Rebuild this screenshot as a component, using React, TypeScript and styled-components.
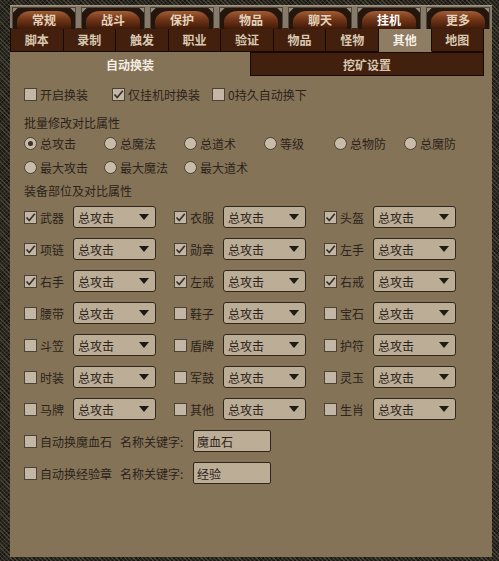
import React from 'react';
import styled, { createGlobalStyle } from 'styled-components';

const GlobalStyle = createGlobalStyle`
  html, body {
    margin: 0;
    padding: 0;
    background: #1f1c17;
  }
  body {
    font-family: "Noto Sans CJK SC", "Noto Sans", sans-serif;
    font-size: 12px;
  }
`;

const Frame = styled.div`
  width: 499px;
  height: 561px;
  box-sizing: border-box;
  padding: 5px 7px 4px 10px;
  background-color: #2a2720;
  background-image:
    repeating-linear-gradient(45deg, rgba(96, 90, 74, 0.55) 0 1px, transparent 1px 3px),
    repeating-linear-gradient(-45deg, rgba(12, 10, 8, 0.6) 0 1px, transparent 1px 3px);
`;

const Panel = styled.div`
  height: 100%;
  display: flex;
  flex-direction: column;
  background: #857358;
  color: #2b2319;
`;

const TopBar = styled.div`
  display: flex;
  gap: 5px;
  height: 23px;
  box-sizing: border-box;
  padding: 1px 2px 0;
  background: #867b6a;
  border-top: 1px solid #a49985;
`;

const TopTab = styled.div<{ $active?: boolean }>`
  position: relative;
  width: 64px;
  height: 22px;
  box-sizing: border-box;
  border: 1px solid #4e453b;
  border-bottom: none;
  background:
    linear-gradient(135deg, #8f8674 0 3px, #3a3129 3px 4px, transparent 4px) top left / 8px 8px no-repeat,
    linear-gradient(225deg, #8f8674 0 3px, #3a3129 3px 4px, transparent 4px) top right / 8px 8px no-repeat,
    #24160d;
  display: flex;
  align-items: center;
  justify-content: center;
  font-weight: bold;
  color: ${p => (p.$active ? '#ffffff' : '#e2d4bc')};

  &::before {
    content: '';
    position: absolute;
    left: 4px;
    right: 4px;
    top: 3px;
    bottom: 0;
    border-radius: 14px 14px 2px 2px / 11px 11px 2px 2px;
    background: linear-gradient(180deg, #a05e36 0%, #743618 45%, #3e1a09 100%);
  }

  span {
    position: relative;
    padding-top: 2px;
  }
`;

const TabRow = styled.div`
  display: flex;
  width: 474px;
  height: 24px;
`;

const SubTab = styled.div<{ $active?: boolean }>`
  flex: 1;
  box-sizing: border-box;
  display: flex;
  align-items: center;
  justify-content: center;
  font-weight: bold;
  border-right: 1px solid #160a03;
  border-bottom: 1px solid #160a03;
  &:first-child {
    border-left: 1px solid #160a03;
  }
  background: ${p => (p.$active ? '#8e7c63' : '#43200e')};
  color: ${p => (p.$active ? '#f6f0e6' : '#d8c9b1')};
  ${p => p.$active && 'border-bottom-color: #8e7c63;'}
`;

const PageTab = styled.div<{ $active?: boolean; $width: number }>`
  width: ${p => p.$width}px;
  box-sizing: border-box;
  display: flex;
  align-items: center;
  justify-content: center;
  font-weight: bold;
  background: ${p => (p.$active ? 'transparent' : '#43200e')};
  color: ${p => (p.$active ? '#f4eee4' : '#d8c9b1')};
  border: ${p => (p.$active ? 'none' : '1px solid #160a03')};
`;

const Body = styled.div`
  display: flex;
  flex-direction: column;
  padding: 8px 0 0 14px;
`;

const Line = styled.div<{ $top?: number }>`
  display: flex;
  align-items: center;
  height: 20px;
  margin-top: ${p => p.$top ?? 0}px;
`;

const Title = styled.div<{ $top?: number }>`
  height: 20px;
  line-height: 20px;
  margin-top: ${p => p.$top ?? 0}px;
`;

const Option = styled.label<{ $width?: number }>`
  display: flex;
  align-items: center;
  gap: 3px;
  width: ${p => (p.$width ? `${p.$width}px` : 'auto')};
  white-space: nowrap;
`;

const Box = styled.span`
  width: 13px;
  height: 13px;
  box-sizing: border-box;
  border: 1px solid #4b4137;
  background: #c3b6a4;
  display: flex;
  align-items: center;
  justify-content: center;
  flex: none;
`;

const Round = styled.span<{ $on?: boolean }>`
  width: 13px;
  height: 13px;
  box-sizing: border-box;
  border-radius: 50%;
  border: 1px solid #4b4137;
  background: #c8bca9;
  display: flex;
  align-items: center;
  justify-content: center;
  flex: none;
  &::after {
    content: '';
    width: 5px;
    height: 5px;
    border-radius: 50%;
    background: ${p => (p.$on ? '#3a3026' : 'transparent')};
  }
`;

const RadioGrid = styled.div<{ $top?: number }>`
  display: grid;
  grid-template-columns: 80px 80px 80px 70px 70px auto;
  height: 20px;
  align-items: center;
  margin-top: ${p => p.$top ?? 0}px;
`;

const PartGrid = styled.div`
  display: grid;
  grid-template-columns: repeat(3, 150px);
  row-gap: 10px;
  margin-top: 5px;
`;

const Part = styled.div`
  display: flex;
  align-items: center;
  height: 22px;
`;

const PartName = styled.span`
  width: 33px;
  margin-left: 3px;
`;

const Select = styled.div`
  width: 83px;
  height: 22px;
  box-sizing: border-box;
  border: 1px solid #2e261d;
  border-radius: 3px;
  background: #bcad97;
  display: flex;
  align-items: center;
  justify-content: space-between;
  padding: 0 6px 0 4px;
`;

const KeyRow = styled.div`
  display: flex;
  align-items: center;
  height: 22px;
  margin-top: 10px;
`;

const KeyLabel = styled.span<{ $width: number; $gap?: number }>`
  width: ${p => p.$width}px;
  margin-left: ${p => p.$gap ?? 0}px;
  white-space: nowrap;
`;

const Input = styled.div`
  width: 78px;
  height: 22px;
  box-sizing: border-box;
  border: 1px solid #2e261d;
  border-radius: 2px;
  background: #bcad97;
  display: flex;
  align-items: center;
  padding-left: 3px;
`;

const Check = ({ on }: { on?: boolean }) => (
  <Box>
    {on && (
      <svg width="11" height="11" viewBox="0 0 11 11">
        <polyline points="1.5,5.5 4.2,8.5 9.8,1.8" fill="none" stroke="#3a3128" strokeWidth="1.7" />
      </svg>
    )}
  </Box>
);

const Arrow = () => (
  <svg width="10" height="6" viewBox="0 0 10 6">
    <polygon points="0,0 10,0 5,6" fill="#1f1a14" />
  </svg>
);

const topTabs = ['常规', '战斗', '保护', '物品', '聊天', '挂机', '更多'];
const subTabs = ['脚本', '录制', '触发', '职业', '验证', '物品', '怪物', '其他', '地图'];
const radios = ['总攻击', '总魔法', '总道术', '等级', '总物防', '总魔防', '最大攻击', '最大魔法', '最大道术'];
const parts = [
  ['武器', '衣服', '头盔'],
  ['项链', '勋章', '左手'],
  ['右手', '左戒', '右戒'],
  ['腰带', '鞋子', '宝石'],
  ['斗笠', '盾牌', '护符'],
  ['时装', '军鼓', '灵玉'],
  ['马牌', '其他', '生肖'],
];

export default function App() {
  return (
    <>
      <GlobalStyle />
      <Frame>
        <Panel>
          <TopBar>
            {topTabs.map(t => (
              <TopTab key={t} $active={t === '挂机'}>
                <span>{t}</span>
              </TopTab>
            ))}
          </TopBar>
          <TabRow>
            {subTabs.map((t, i) => (
              <SubTab key={i} $active={t === '其他'}>
                {t}
              </SubTab>
            ))}
          </TabRow>
          <TabRow>
            <PageTab $active $width={240}>自动换装</PageTab>
            <PageTab $width={234}>挖矿设置</PageTab>
          </TabRow>
          <Body>
            <Line>
              <Option $width={88}>
                <Check />
                开启换装
              </Option>
              <Option $width={100}>
                <Check on />
                仅挂机时换装
              </Option>
              <Option>
                <Check />
                0持久自动换下
              </Option>
            </Line>
            <Title $top={9}>批量修改对比属性</Title>
            <RadioGrid>
              {radios.slice(0, 6).map((r, i) => (
                <Option key={r}>
                  <Round $on={i === 0} />
                  {r}
                </Option>
              ))}
            </RadioGrid>
            <RadioGrid $top={4}>
              {radios.slice(6).map(r => (
                <Option key={r}>
                  <Round />
                  {r}
                </Option>
              ))}
            </RadioGrid>
            <Title $top={4}>装备部位及对比属性</Title>
            <PartGrid>
              {parts.map((row, ri) =>
                row.map(p => (
                  <Part key={p + ri}>
                    <Check on={ri < 3} />
                    <PartName>{p}</PartName>
                    <Select>
                      <span>总攻击</span>
                      <Arrow />
                    </Select>
                  </Part>
                ))
              )}
            </PartGrid>
            <KeyRow>
              <Check />
              <KeyLabel $width={80} $gap={3}>自动换魔血石</KeyLabel>
              <KeyLabel $width={73}>名称关键字:</KeyLabel>
              <Input>魔血石</Input>
            </KeyRow>
            <KeyRow>
              <Check />
              <KeyLabel $width={80} $gap={3}>自动换经验章</KeyLabel>
              <KeyLabel $width={73}>名称关键字:</KeyLabel>
              <Input>经验</Input>
            </KeyRow>
          </Body>
        </Panel>
      </Frame>
    </>
  );
}
